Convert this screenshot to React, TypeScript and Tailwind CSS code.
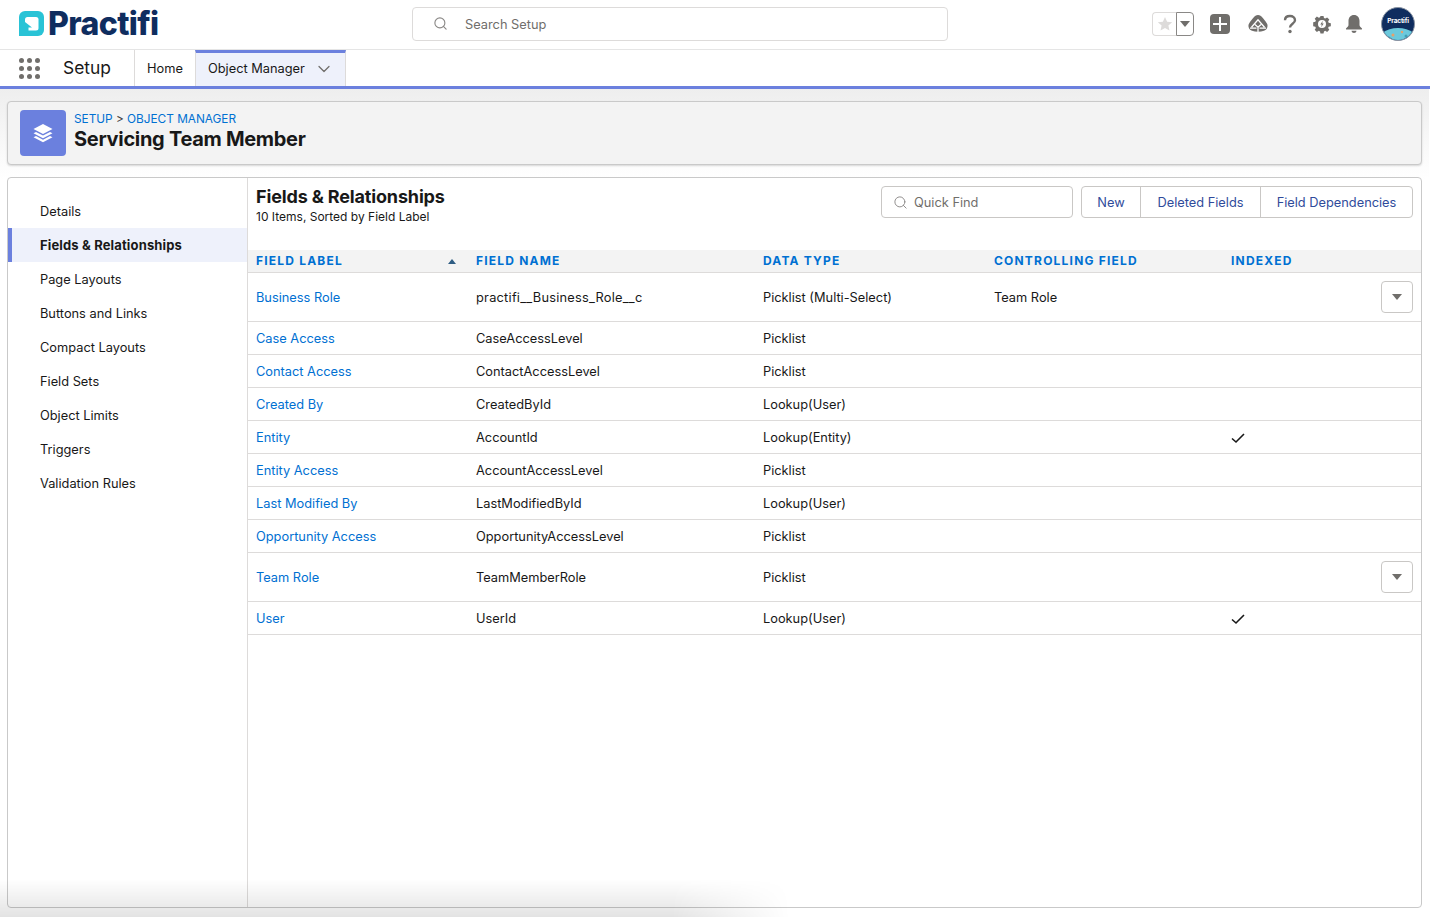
import { ChevronDown, Search } from "lucide-react";

const NAV_ITEMS = [
  "Details",
  "Fields & Relationships",
  "Page Layouts",
  "Buttons and Links",
  "Compact Layouts",
  "Field Sets",
  "Object Limits",
  "Triggers",
  "Validation Rules",
];

interface FieldRow {
  label: string;
  name: string;
  type: string;
  controlling?: string;
  indexed?: boolean;
  menu?: boolean;
}

const ROWS: FieldRow[] = [
  { label: "Business Role", name: "practifi__Business_Role__c", type: "Picklist (Multi-Select)", controlling: "Team Role", menu: true },
  { label: "Case Access", name: "CaseAccessLevel", type: "Picklist" },
  { label: "Contact Access", name: "ContactAccessLevel", type: "Picklist" },
  { label: "Created By", name: "CreatedById", type: "Lookup(User)" },
  { label: "Entity", name: "AccountId", type: "Lookup(Entity)", indexed: true },
  { label: "Entity Access", name: "AccountAccessLevel", type: "Picklist" },
  { label: "Last Modified By", name: "LastModifiedById", type: "Lookup(User)" },
  { label: "Opportunity Access", name: "OpportunityAccessLevel", type: "Picklist" },
  { label: "Team Role", name: "TeamMemberRole", type: "Picklist", menu: true },
  { label: "User", name: "UserId", type: "Lookup(User)", indexed: true },
];

const COLS = "grid grid-cols-[220px_287px_231px_237px_1fr] pl-2";

function LogoMark() {
  return (
    <svg width="25" height="25" viewBox="0 0 25 25" className="shrink-0">
      <rect width="25" height="25" rx="6" fill="#29c3d6" />
      <rect x="6" y="6" width="13.500" height="13.500" rx="2.500" fill="#fff" />
      <path d="M0 11h6l7 5.500H9.500V25H0z" fill="#29c3d6" />
    </svg>
  );
}

function AppLauncher() {
  return (
    <div className="grid grid-cols-3 gap-x-[3px] gap-y-[3px] w-[21px]">
      {Array.from({ length: 9 }).map((_, i) => (
        <span key={i} className="w-[5px] h-[5px] rounded-full bg-[#706e6b]" />
      ))}
    </div>
  );
}

function StackIcon() {
  return (
    <svg width="20" height="20" viewBox="0 0 20 20" fill="#fff">
      <path d="M10 1 19.500 6 10 11 .5 6z" />
      <path d="M3 8.900 10 12.600l7-3.700 2.500 1.300L10 15.200.5 10.200z" />
      <path d="M3 13 10 16.700l7-3.700 2.500 1.300L10 19.300.5 14.300z" />
    </svg>
  );
}

function HeaderIcons() {
  return (
    <div className="flex items-center ml-auto">
      <div className="flex w-[42px] h-[24px] mr-[16px]">
        <div className="w-[24px] rounded-l-[4px] border border-r-0 border-[#dddbda] flex items-center justify-center">
          <svg width="16" height="16" viewBox="0 0 24 24" fill="#dddbda">
            <path d="M12 1.500l3.200 7 7.600.8-5.700 5.100 1.600 7.500L12 18l-6.700 3.900 1.600-7.500L1.200 9.300l7.600-.8z" />
          </svg>
        </div>
        <div className="w-[18px] rounded-r-[4px] border border-[#8a8886] flex items-center justify-center">
          <span className="w-0 h-0 border-x-[5px] border-x-transparent border-t-[6px] border-t-[#706e6b]" />
        </div>
      </div>
      <div className="w-[20px] h-[20px] rounded-[4px] bg-[#706e6b] flex items-center justify-center mr-[18px]">
        <svg width="14" height="14" viewBox="0 0 14 14" fill="#fff">
          <path d="M6 0h2v6h6v2H8v6H6V8H0V6h6z" />
        </svg>
      </div>
      <svg width="20" height="20" viewBox="0 0 20 20" className="mr-[15px]">
        <path
          d="M10 1c2 0 3.200 1 4.400 2.600 1.300 1.700 3.200 3.700 4.500 5.900.9 1.500.8 3 .2 4.400-.6 1.400-1.700 2.300-3.100 2.800-1.900.7-3.900 1-6 1s-4.100-.3-6-1c-1.400-.5-2.500-1.400-3.100-2.800-.6-1.400-.7-2.900.2-4.400C2.400 7.300 4.300 5.300 5.600 3.600 6.800 2 8 1 10 1z"
          fill="#706e6b"
        />
        <path d="M3.500 13.200 10 5.800l6.500 7.400M7 10.500l3 2.700 3-2.700M2 14.200h6.500M11.500 14.200H18M10 13.500V19" fill="none" stroke="#fff" strokeWidth="1.300" />
      </svg>
      <svg width="14" height="20" viewBox="0 0 14 20" className="mr-[15px]" fill="none">
        <path d="M2 6.200C2 3.300 4.200 2 7 2s5 1.500 5 4.200c0 3.400-5 3.600-5 7.300" stroke="#706e6b" strokeWidth="2.400" />
        <circle cx="7" cy="17.500" r="1.700" fill="#706e6b" />
      </svg>
      <svg width="20" height="20" viewBox="0 0 20 20" className="mr-[12px]">
        <path
          d="M8.300 1h3.400l.5 2.400 1.400.6 2.100-1.300 2.400 2.400-1.300 2.100.6 1.400 2.400.5v3.400l-2.400.5-.6 1.400 1.300 2.100-2.400 2.400-2.100-1.300-1.400.6-.5 2.400H8.300l-.5-2.400-1.400-.6-2.100 1.300-2.400-2.400 1.300-2.100-.6-1.400-2.400-.5V8.100l2.400-.5.6-1.400-1.300-2.100 2.400-2.400 2.100 1.300 1.400-.6z"
          fill="#706e6b"
          transform="translate(1 1) scale(.9)"
        />
        <circle cx="10" cy="10" r="4" fill="#fff" />
        <path d="M10.800 6.800 8.300 10.500h1.500l-.6 2.700 2.500-3.700h-1.500z" fill="#706e6b" />
      </svg>
      <svg width="20" height="20" viewBox="0 0 20 20" className="mr-[17px]" fill="#706e6b">
        <path d="M10 1c3.400 0 5.500 2.600 5.500 6v4c0 1.500 1.300 2.300 2.300 3.200.6.600.2 1.300-.5 1.300H2.700c-.7 0-1.100-.7-.5-1.300C3.200 13.300 4.500 12.500 4.500 11V7c0-3.400 2.100-6 5.500-6z" />
        <path d="M7.500 16.800h5C12.300 18.200 11.300 19 10 19s-2.300-.8-2.500-2.200z" />
      </svg>
      <div className="w-[34px] h-[34px] rounded-full overflow-hidden border border-[#8a94a3] bg-[#0f2d5f] flex flex-col items-center mr-[15px]">
        <span className="text-[6.500px] leading-none font-bold text-white mt-[10px] tracking-tight">Practifi</span>
        <svg width="32" height="15" viewBox="0 0 32 15" className="mt-[3px] shrink-0">
          <ellipse cx="16" cy="17" rx="22" ry="16" fill="#6cc9dc" />
          <circle cx="11" cy="8" r="1.500" fill="#e8a06a" />
          <circle cx="20" cy="5" r="1.200" fill="#e8a06a" />
          <circle cx="24" cy="9" r="1.500" fill="#3f9fb5" />
          <circle cx="7" cy="11" r="1.500" fill="#3f9fb5" />
        </svg>
      </div>
    </div>
  );
}

function CaretMenu() {
  return (
    <div className="ml-auto mr-2 w-[32px] h-[32px] rounded-[4px] border border-[#c9c7c5] bg-white flex items-center justify-center">
      <span className="w-0 h-0 border-x-[5px] border-x-transparent border-t-[6px] border-t-[#706e6b]" />
    </div>
  );
}

function Check() {
  return (
    <svg width="14" height="14" viewBox="0 0 14 14" fill="none" className="mt-[2px]">
      <path d="M1 7.500 5 11 13 3" stroke="#181818" strokeWidth="1.600" />
    </svg>
  );
}

export default function App() {
  return (
    <div className="relative h-[917px] overflow-hidden flex flex-col bg-white text-[12.800px] text-[#181818] font-['Inter','Liberation_Sans',sans-serif]">
      <header className="h-[50px] shrink-0 flex items-center border-b border-[#e5e5e5] pl-[19px] pb-[2px]">
        <div className="flex items-center w-[393px]">
          <LogoMark />
          <span className="ml-[4px] text-[32px] leading-none font-extrabold tracking-[-0.6px] text-[#0f2d5f]">Practifi</span>
        </div>
        <div className="w-[536px] h-[34px] rounded-[4px] border border-[#dddbda] flex items-center pl-[20px] text-[#706e6b]">
          <Search size={15} strokeWidth={1.800} className="text-[#8a8886]" />
          <span className="ml-[17px] pt-[2px]">Search Setup</span>
        </div>
        <HeaderIcons />
      </header>

      <nav className="h-[39px] shrink-0 flex border-b-[3px] border-[#6b80de]">
        <div className="w-[135px] flex items-center pl-[19px] border-r border-[#dddbda]">
          <AppLauncher />
          <span className="ml-[23px] text-[17.400px] leading-none">Setup</span>
        </div>
        <div className="w-[60px] flex items-center justify-center pt-[2px]">Home</div>
        <div className="w-[151px] flex items-center pl-[12px] pb-[1px] bg-[#eef1fb] border-t-[3px] border-t-[#6b80de] border-x border-x-[#dddbda]">
          Object Manager
          <ChevronDown size={20} strokeWidth={1.500} className="ml-[9px] text-[#706e6b]" />
        </div>
      </nav>

      <div className="flex-1 min-h-0 flex flex-col px-[7px] pb-[9px] pt-[12px] mr-[1px] bg-gradient-to-b from-[#eeeeee] to-white to-[90px]">
        <section className="h-[64px] shrink-0 rounded-[4px] border border-[#c9c9c9] bg-[#f3f3f3] shadow-[0_1px_2px_rgba(0,0,0,0.15)] flex items-center pl-[12px]">
          <div className="w-[46px] h-[46px] rounded-[4px] bg-[#6b80de] flex items-center justify-center">
            <StackIcon />
          </div>
          <div className="ml-[8px] -mt-[5px]">
            <div className="text-[11.800px] leading-[16px] text-[#0070d2]">
              SETUP <span className="text-[#3e3e3c]">&gt;</span> OBJECT MANAGER
            </div>
            <h1 className="text-[20px] leading-[24px] font-bold tracking-[-0.3px]">Servicing Team Member</h1>
          </div>
        </section>

        <main className="flex-1 min-h-0 mt-[12px] flex rounded-[4px] border border-[#c9c9c9] bg-white">
          <aside className="w-[240px] shrink-0 border-r border-[#dddbda] pt-[16px]">
            {NAV_ITEMS.map((item) =>
              item === "Fields & Relationships" ? (
                <div key={item} className="h-[34px] flex items-center pl-[28px] pt-[2px] bg-[#eef1fb] border-l-[4px] border-[#6b80de] text-[13px] font-bold tracking-[0.15px]">
                  {item}
                </div>
              ) : (
                <div key={item} className="h-[34px] flex items-center pl-[32px] pt-[2px]">
                  {item}
                </div>
              )
            )}
          </aside>

          <div className="flex-1 min-w-0">
            <div className="h-[72px] flex items-start pl-2 pr-2 pt-[8px]">
              <div>
                <h2 className="text-[18px] leading-[22px] font-bold tracking-[-0.15px]">Fields &amp; Relationships</h2>
                <p className="text-[12px] leading-[16px] mt-[1px]">10 Items, Sorted by Field Label</p>
              </div>
              <div className="ml-auto flex">
                <div className="w-[192px] h-[32px] rounded-[4px] border border-[#c9c7c5] flex items-center pl-[11px] text-[#706e6b]">
                  <Search size={15} strokeWidth={1.500} className="text-[#8a8886]" />
                  <span className="ml-[6px] pt-[2px]">Quick Find</span>
                </div>
                <div className="ml-2 h-[32px] flex rounded-[4px] border border-[#c9c7c5] text-[#2f4b9b]">
                  <span className="w-[58px] pt-[2px] flex items-center justify-center">New</span>
                  <span className="w-[120px] pt-[2px] flex items-center justify-center border-l border-[#c9c7c5]">Deleted Fields</span>
                  <span className="w-[152px] pt-[2px] flex items-center justify-center border-l border-[#c9c7c5]">Field Dependencies</span>
                </div>
              </div>
            </div>

            <div className={`${COLS} h-[23px] items-center bg-[#f3f3f3] border-b border-[#dddbda] text-[12px] font-bold tracking-[1.200px] text-[#0070d2]`}>
              <div className="flex items-center pr-[20px]">
                FIELD LABEL
                <span className="ml-auto w-0 h-0 border-x-[4px] border-x-transparent border-b-[5px] border-b-[#2f5d83]" />
              </div>
              <div>FIELD NAME</div>
              <div>DATA TYPE</div>
              <div>CONTROLLING FIELD</div>
              <div>INDEXED</div>
            </div>

            {ROWS.map((row) => (
              <div key={row.label} className={`${COLS} ${row.menu ? "h-[49px]" : "h-[33px]"} items-center border-b border-[#dddbda]`}>
                <div className="text-[#0070d2] pt-[2px]">{row.label}</div>
                <div className={row.name.includes("__") ? "pt-[2px] tracking-[0.24px]" : "pt-[2px]"}>{row.name}</div>
                <div className="pt-[2px]">{row.type}</div>
                <div className="pt-[2px]">{row.controlling}</div>
                <div className="flex items-center">
                  {row.indexed && <Check />}
                  {row.menu && <CaretMenu />}
                </div>
              </div>
            ))}
          </div>
        </main>
      </div>

      <div className="absolute left-0 bottom-0 w-[790px] h-[38px] pointer-events-none bg-gradient-to-b from-transparent to-[rgba(0,0,0,0.11)] [mask-image:linear-gradient(to_right,black_85%,transparent)]" />
    </div>
  );
}
